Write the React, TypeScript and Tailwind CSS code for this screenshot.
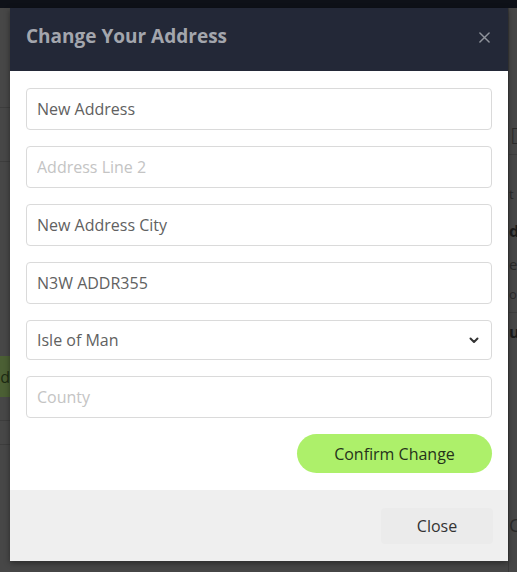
import React from "react";

const font = { fontFamily: '"Open Sans", "Noto Sans", sans-serif' };

function Field({ value, placeholder }: { value?: string; placeholder: string }) {
  return (
    <input
      readOnly
      defaultValue={value}
      placeholder={placeholder}
      className="h-[42px] w-full rounded-[4px] border border-[#dadada] bg-white px-[10px] text-[16px] text-[#616161] outline-none placeholder:text-[#c4c4c4]"
      style={font}
    />
  );
}

export default function App() {
  return (
    <div className="relative h-[572px] w-[517px] overflow-hidden bg-[#464646]" style={font}>
      {/* dimmed page behind */}
      <div className="flex h-full flex-col">
        <div className="h-[8px] bg-[#0e1118]" />
        <div className="flex flex-1">
          <div className="flex w-[10px] flex-col">
            <div className="h-[100px] border-b border-[#3d3d3d] bg-[#474747]" />
            <div className="h-[54px] border-b border-[#3d3d3d] bg-[#474747]" />
            <div className="h-[194px] bg-[#474747]" />
            <div className="flex h-[41px] items-center justify-end overflow-hidden bg-[#4b5f34] text-[16px] text-[#1d2a12]">
              <span className="whitespace-nowrap">d</span>
            </div>
            <div className="h-[24px] border-b border-[#3d3d3d] bg-[#474747]" />
            <div className="h-[24px] border-b border-[#3d3d3d] bg-[#474747]" />
            <div className="flex-1 bg-[#474747]" />
          </div>
          <div className="w-[498px]" />
          <div className="flex w-[9px] flex-col overflow-hidden border-l border-[#3a3a3a] bg-[#474747] whitespace-nowrap">
            <div className="h-[107px]" />
            <div className="h-[40px] border-b border-[#3d3d3d] pl-[1px] text-[22px] font-light leading-[40px] text-[#2a2a2a]">D</div>
            <div className="h-[24px]" />
            <div className="h-[30px] text-[13px] leading-[30px] text-[#2a2a2a]">t</div>
            <div className="h-[44px] text-[16px] font-bold leading-[44px] text-[#1a1a1a]">d</div>
            <div className="h-[22px] text-[15px] leading-[22px] text-[#2a2a2a]">e</div>
            <div className="h-[38px] border-b border-[#3d3d3d] text-[13px] leading-[38px] text-[#2a2a2a]">o</div>
            <div className="h-[38px] text-[16px] font-bold leading-[38px] text-[#1a1a1a]">u</div>
            <div className="h-[154px]" />
            <div className="h-[40px] text-[18px] leading-[40px] text-[#2a2a2a]">C</div>
          </div>
        </div>
      </div>

      {/* modal */}
      <div className="absolute left-[10px] top-[8px] flex w-[498px] flex-col shadow-[0_2px_6px_rgba(0,0,0,0.4)]">
        <div className="flex h-[63px] items-center justify-between bg-[#232837] pb-[6px] pl-[16px] pr-[18px]">
          <h2 className="text-[19px] font-bold text-[#a3a6ad]">Change Your Address</h2>
          <svg width="11" height="11" viewBox="0 0 12 12" className="mt-[2px]">
            <path d="M1 1 L11 11 M11 1 L1 11" stroke="#8f939b" strokeWidth="1.6" strokeLinecap="round" />
          </svg>
        </div>
        <div className="flex flex-col gap-[16px] bg-white px-[16px] pb-[17px] pt-[17px]">
          <Field value="New Address" placeholder="Address Line 1" />
          <Field placeholder="Address Line 2" />
          <Field value="New Address City" placeholder="City" />
          <Field value="N3W ADDR355" placeholder="Postcode" />
          <div className="relative">
            <select
              defaultValue="Isle of Man"
              className="h-[40px] w-full appearance-none rounded-[4px] border border-[#dadada] bg-white px-[10px] text-[16px] text-[#616161] outline-none"
              style={font}
            >
              <option>Isle of Man</option>
            </select>
            <svg width="10" height="7" viewBox="0 0 10 7" className="pointer-events-none absolute right-[13px] top-[17px]">
              <path d="M1.5 1.5 L5 5 L8.5 1.5" stroke="#333" strokeWidth="2" fill="none" strokeLinecap="round" strokeLinejoin="round" />
            </svg>
          </div>
          <Field placeholder="County" />
          <div className="flex justify-end">
            <button className="h-[39px] w-[195px] rounded-full bg-[#adf06a] text-[16px] text-[#26331a]" style={font}>
              Confirm Change
            </button>
          </div>
        </div>
        <div className="flex h-[71px] items-center justify-end bg-[#efefef] pr-[15px]">
          <button className="h-[36px] w-[112px] rounded-[4px] bg-[#ebebeb] text-[16px] text-[#333333]" style={font}>
            Close
          </button>
        </div>
      </div>
    </div>
  );
}
